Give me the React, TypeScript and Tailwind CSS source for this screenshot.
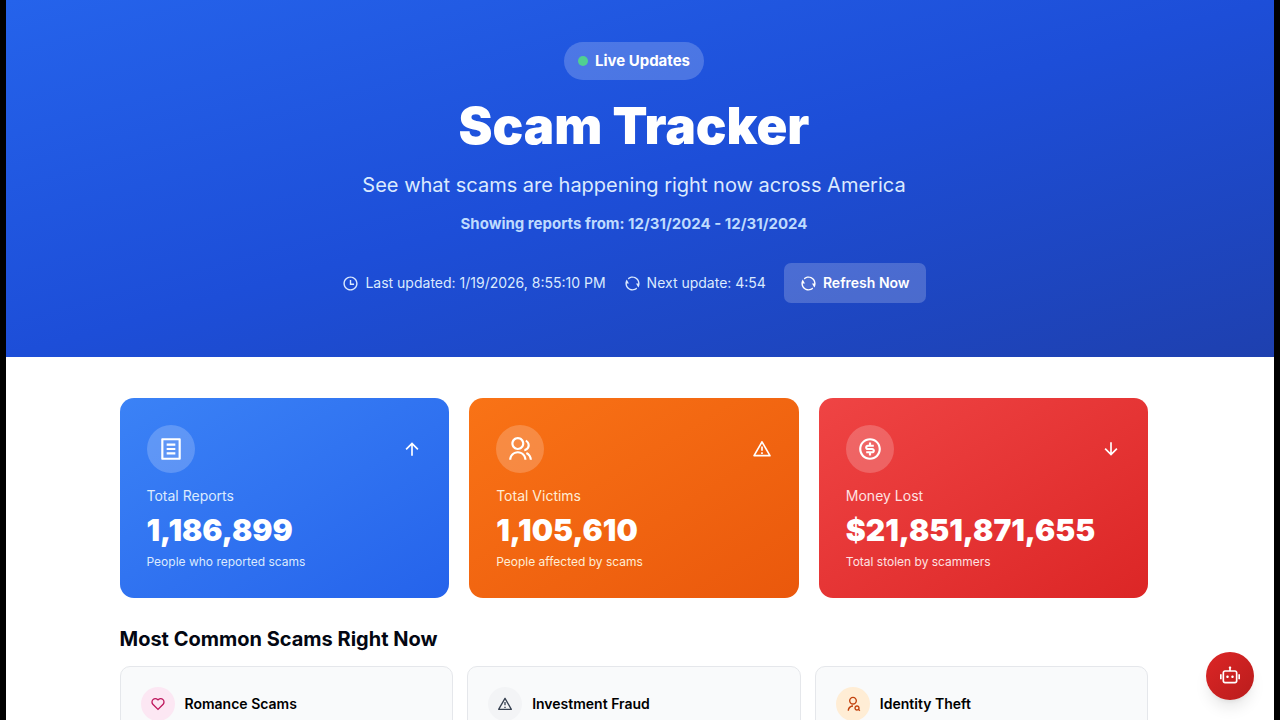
import type { IconType } from "react-icons";
import {
  RiAlertLine,
  RiArrowDownLine,
  RiArrowUpLine,
  RiFileListLine,
  RiGroupLine,
  RiHeartLine,
  RiMoneyDollarCircleLine,
  RiRefreshLine,
  RiRobot2Line,
  RiTimeLine,
  RiUserSearchLine,
} from "react-icons/ri";

interface Stat {
  label: string;
  value: string;
  note: string;
  icon: IconType;
  trend: IconType;
  card: string;
  text: string;
}

interface ScamType {
  name: string;
  icon: IconType;
  badge: string;
}

const STATS: Stat[] = [
  {
    label: "Total Reports",
    value: "1,186,899",
    note: "People who reported scams",
    icon: RiFileListLine,
    trend: RiArrowUpLine,
    card: "from-[#3b82f6] to-[#2563eb]",
    text: "text-[#dbeafe]",
  },
  {
    label: "Total Victims",
    value: "1,105,610",
    note: "People affected by scams",
    icon: RiGroupLine,
    trend: RiAlertLine,
    card: "from-[#f97316] to-[#ea580c]",
    text: "text-[#ffedd5]",
  },
  {
    label: "Money Lost",
    value: "$21,851,871,655",
    note: "Total stolen by scammers",
    icon: RiMoneyDollarCircleLine,
    trend: RiArrowDownLine,
    card: "from-[#ef4444] to-[#dc2626]",
    text: "text-[#fee2e2]",
  },
];

const SCAM_TYPES: ScamType[] = [
  { name: "Romance Scams", icon: RiHeartLine, badge: "bg-[#fce7f3] text-[#be185d]" },
  { name: "Investment Fraud", icon: RiAlertLine, badge: "bg-[#f3f4f6] text-[#374151]" },
  { name: "Identity Theft", icon: RiUserSearchLine, badge: "bg-[#ffedd5] text-[#c2410c]" },
];

function StatCard({ stat }: { stat: Stat }) {
  const Icon = stat.icon;
  const Trend = stat.trend;

  return (
    <div className={`rounded-[14px] bg-linear-to-br/srgb px-[27px] pt-[27px] pb-[26px] ${stat.card}`}>
      <div className="flex items-center justify-between mb-[11px]">
        <div className="w-12 h-12 flex items-center justify-center rounded-full bg-white/20">
          <Icon className="w-[26px] h-[26px]" />
        </div>
        <Trend className="w-5 h-5" />
      </div>
      <p className={`text-[14px] leading-6 ${stat.text}`}>{stat.label}</p>
      <p className="text-[30px] leading-[44px] font-black">{stat.value}</p>
      <p className={`text-[12px] leading-5 ${stat.text}`}>{stat.note}</p>
    </div>
  );
}

function ScamCard({ scam }: { scam: ScamType }) {
  const Icon = scam.icon;

  return (
    <div className="rounded-[10px] border border-[#e5e7eb] bg-[#f9fafb] p-5">
      <div className="flex items-center gap-[10px]">
        <div className={`w-[34px] h-[34px] flex items-center justify-center rounded-full ${scam.badge}`}>
          <Icon className="w-4 h-4" />
        </div>
        <h3 className="text-[14px] leading-6 font-semibold text-black">{scam.name}</h3>
      </div>
    </div>
  );
}

export default function App() {
  return (
    <div className="min-h-screen bg-black px-[6px] font-['Inter',sans-serif]">
      <div className="min-h-screen bg-white">
        {/* Hero */}
        <header className="flex flex-col items-center bg-linear-to-br/srgb from-[#2563eb] via-[#1d4ed8] to-[#1e40af] pl-6 pr-9 pt-[42px] pb-[54px] text-center text-white">
          <div className="flex items-center gap-[7px] rounded-full bg-white/20 px-[14px] py-[7px]">
            <span className="w-[10px] h-[10px] rounded-full bg-[#50d091]" />
            <span className="text-[15px] leading-6 font-bold">Live Updates</span>
          </div>
          <h1 className="mt-5 text-[51px] leading-[51px] font-black">Scam Tracker</h1>
          <p className="mt-5 text-[20px] leading-7 text-[#dbeafe]">
            See what scams are happening right now across America
          </p>
          <p className="mt-[13px] text-[15px] leading-6 font-bold text-[#bfdbfe]">
            Showing reports from: 12/31/2024 - 12/31/2024
          </p>

          <div className="mt-[27px] flex flex-wrap items-center justify-center gap-[18px] text-[14px] leading-5 text-[#dbeafe]">
            <div className="flex items-center gap-[6px]">
              <RiTimeLine className="w-[17px] h-[17px]" />
              <span>Last updated: 1/19/2026, 8:55:10 PM</span>
            </div>
            <div className="flex items-center gap-[6px]">
              <RiRefreshLine className="w-[17px] h-[17px]" />
              <span>Next update: 4:54</span>
            </div>
            <button
              type="button"
              className="flex items-center gap-[6px] rounded-[7px] bg-white/20 px-4 py-[10px] font-semibold text-white hover:bg-white/30"
            >
              <RiRefreshLine className="w-[17px] h-[17px]" />
              Refresh Now
            </button>
          </div>
        </header>

        <div className="pr-3">
          <main className="mx-auto max-w-[1083px] px-[27px] pt-[41px]">
            {/* Totals */}
            <section className="grid grid-cols-3 gap-5 text-white">
              {STATS.map((stat) => (
                <StatCard key={stat.label} stat={stat} />
              ))}
            </section>

            {/* Scam types */}
            <section className="mt-[27px]">
              <h2 className="mb-[13px] text-[20px] leading-7 font-bold text-[#030712]">
                Most Common Scams Right Now
              </h2>
              <div className="grid grid-cols-3 gap-[14px]">
                {SCAM_TYPES.map((scam) => (
                  <ScamCard key={scam.name} scam={scam} />
                ))}
              </div>
            </section>
          </main>
        </div>
      </div>

      <button
        type="button"
        aria-label="Open chat assistant"
        className="fixed right-[26px] bottom-5 w-12 h-12 flex items-center justify-center rounded-full bg-linear-to-br/srgb from-[#dc2626] to-[#b91c1c] text-white shadow-lg"
      >
        <RiRobot2Line className="w-5 h-5" />
      </button>
    </div>
  );
}
